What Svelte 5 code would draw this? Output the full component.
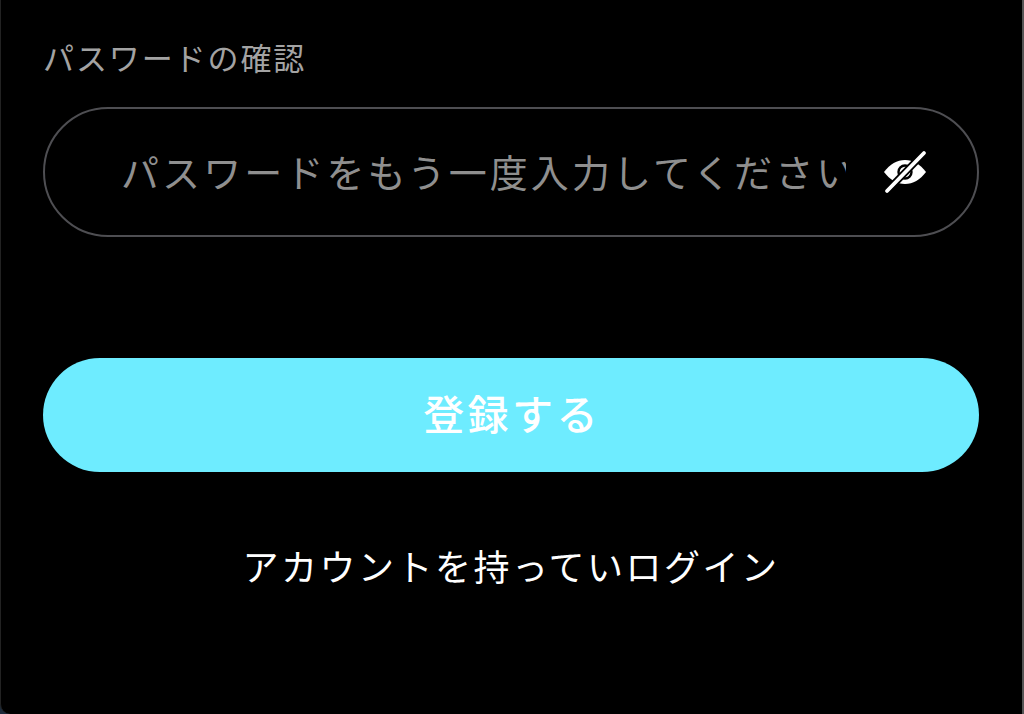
<script>
	let confirm = $state('')
</script>

<div class="screen">
	<form class="form" onsubmit={(e) => e.preventDefault()}>
		<label class="label" for="confirm">パスワードの確認</label>
		<div class="field">
			<input
				id="confirm"
				type="password"
				placeholder="パスワードをもう一度入力してください"
				bind:value={confirm} />
			<button type="button" class="eye" aria-label="パスワードを表示">
				<svg width="44" height="44" viewBox="0 0 44 44">
					<path
						d="M1 22 C7 14 14 10 22 10 C30 10 37 14 43 22 C37 30 30 34 22 34 C14 34 7 30 1 22 Z"
						fill="#fff" />
					<circle cx="22" cy="22" r="6.5" fill="none" stroke="#000" stroke-width="2.4" />
					<path d="M41 3 L4 41" stroke="#000" stroke-width="7.5" />
					<path d="M41 3 L4 41" stroke="#fff" stroke-width="3.8" stroke-linecap="round" />
				</svg>
			</button>
		</div>
		<button type="submit" class="submit">登録する</button>
		<a class="login" href="#login">アカウントを持っていログイン</a>
	</form>
</div>

<style>
	:global(body) {
		margin: 0;
		background: #1c2a3a;
	}
	.screen {
		box-sizing: border-box;
		height: 714px;
		background: #000;
		border-left: 1px solid #222;
		border-right: 2px solid #555;
		border-bottom-left-radius: 10px;
		font-family: 'Noto Sans CJK JP', sans-serif;
		overflow: hidden;
	}
	.form {
		display: flex;
		flex-direction: column;
		padding: 35px 43px 0 42px;
	}
	.label {
		font-size: 31px;
		line-height: 44px;
		letter-spacing: 1.9px;
		color: #a3a3a3;
		font-weight: 400;
	}
	.field {
		display: flex;
		align-items: center;
		height: 130px;
		box-sizing: border-box;
		margin-top: 28px;
		padding: 0 50px 0 76px;
		border: 2px solid #4e4e52;
		border-radius: 65px;
	}
	input {
		flex: 1;
		min-width: 0;
		margin-top: -3px;
		background: none;
		border: 0;
		outline: 0;
		padding: 0;
		font: inherit;
		font-size: 38px;
		font-weight: 400;
		letter-spacing: 3.1px;
		color: #fff;
	}
	input::placeholder {
		color: #8f8f8f;
		opacity: 1;
	}
	.eye {
		display: flex;
		margin-left: 37px;
		padding: 0;
		background: none;
		border: 0;
	}
	.submit {
		height: 114px;
		margin-top: 121px;
		padding: 0 0 6px 2px;
		background: #6eecff;
		border: 0;
		border-radius: 57px;
		color: #fff;
		font: inherit;
		font-size: 41px;
		font-weight: 500;
		letter-spacing: 3.4px;
	}
	.login {
		margin-top: 65px;
		text-align: center;
		font-size: 36px;
		font-weight: 400;
		line-height: 56px;
		letter-spacing: 2.5px;
		color: #fff;
		text-decoration: none;
	}
</style>
